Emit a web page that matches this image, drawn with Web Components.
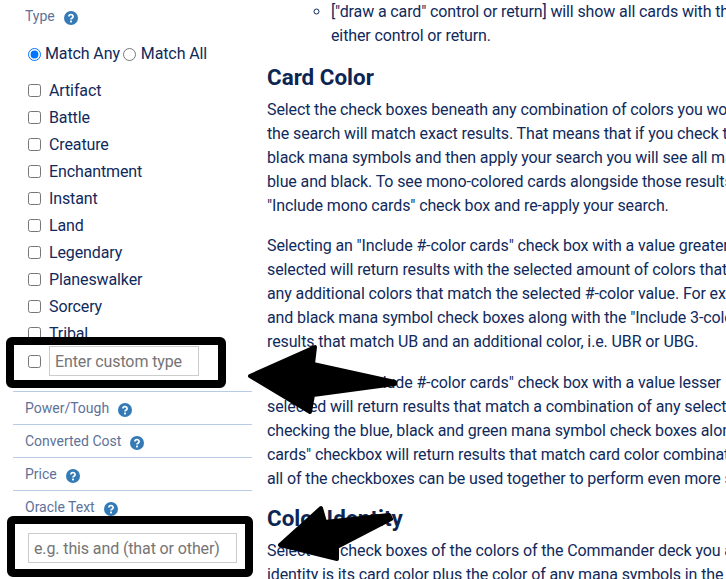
<!DOCTYPE html>
<html lang="en">
<head>
<meta charset="utf-8">
<title>Search help</title>
<style>
  html, body { margin: 0; height: 100%; overflow: hidden; background: #fff; }
  body { font-family: Roboto, "Liberation Sans", sans-serif; font-size: 16px; line-height: 24px; letter-spacing: -0.12px; color: #102a5c; }
</style>
</head>
<body>
<help-page>
  <search-sidebar slot="side">
    <type-filter></type-filter>
    <filter-row label="Power/Tough"></filter-row>
    <filter-row label="Converted Cost"></filter-row>
    <filter-row label="Price"></filter-row>
    <filter-row label="Oracle Text" placeholder="e.g. this and (that or other)"></filter-row>
  </search-sidebar>
  <help-doc slot="main">
    <sub-item>["draw a card" control or return] will show all cards with the<br>either control or return.</sub-item>
    <doc-heading>Card Color</doc-heading>
    <doc-para>Select the check boxes beneath any combination of colors you would<br>the search will match exact results. That means that if you check the<br>black mana symbols and then apply your search you will see all mana<br>blue and black. To see mono-colored cards alongside those results<br>"Include mono cards" check box and re-apply your search.</doc-para>
    <doc-para class="next">Selecting an "Include #-color cards" check box with a value greater<br>selected will return results with the selected amount of colors that<br>any additional colors that match the selected #-color value. For example<br>and black mana symbol check boxes along with the "Include 3-color<br>results that match UB and an additional color, i.e. UBR or UBG.</doc-para>
    <doc-para class="next">Selecting an "Include #-color cards" check box with a value lesser<br>selected will return results that match a combination of any selected<br>checking the blue, black and green mana symbol check boxes along<br>cards" checkbox will return results that match card color combination<br>all of the checkboxes can be used together to perform even more specific</doc-para>
    <doc-heading class="tight">Color Identity</doc-heading>
    <doc-para class="after">Select the check boxes of the colors of the Commander deck you are<br>identity is its card color plus the color of any mana symbols in the</doc-para>
  </help-doc>
</help-page>
<mark-up></mark-up>

<script>
class HelpPage extends HTMLElement {
  constructor() {
    super();
    this.shadowDOM = this.attachShadow({ mode: 'open' });
  }

  connectedCallback() {
    this.shadowDOM.innerHTML = `
      <style>
        :host { display: grid; grid-template-columns: 253px 1fr; height: 100vh; overflow: hidden; }
      </style>
      <slot name="side"></slot>
      <slot name="main"></slot>
    `;
  }
}

class SearchSidebar extends HTMLElement {
  constructor() {
    super();
    this.shadowDOM = this.attachShadow({ mode: 'open' });
  }

  connectedCallback() {
    this.shadowDOM.innerHTML = `
      <style>
        :host { display: block; padding-left: 13px; overflow: hidden; }
      </style>
      <slot></slot>
    `;
  }
}

class HelpIcon extends HTMLElement {
  constructor() {
    super();
    this.shadowDOM = this.attachShadow({ mode: 'open' });
  }

  connectedCallback() {
    this.shadowDOM.innerHTML = `
      <style>
        :host { display: block; width: 14px; height: 14px; margin: 3px 0 0 9px; }
        svg { display: block; }
      </style>
      <svg width="14" height="14" viewBox="0 0 14 14">
        <circle cx="7" cy="7" r="7" fill="#337ab7"/>
        <path d="M4.9 5.5a2.1 1.9 0 1 1 3.3 1.5c-.8.5-1.2.8-1.2 1.6" fill="none" stroke="#fff" stroke-width="1.7"/>
        <rect x="6.05" y="9.6" width="1.9" height="1.8" fill="#fff"/>
      </svg>
    `;
  }
}

class FilterTitle extends HTMLElement {
  constructor() {
    super();
    this.shadowDOM = this.attachShadow({ mode: 'open' });
  }

  connectedCallback() {
    this.shadowDOM.innerHTML = `
      <style>
        :host { display: flex; align-items: center; height: 20px; padding-left: 12px; font-size: 14px; line-height: 20px; letter-spacing: 0; color: #5d7299; }
      </style>
      <slot></slot>
      <help-icon></help-icon>
    `;
  }
}

class TypeFilter extends HTMLElement {
  constructor() {
    super();
    this.shadowDOM = this.attachShadow({ mode: 'open' });
  }

  connectedCallback() {
    const types = ['Artifact', 'Battle', 'Creature', 'Enchantment', 'Instant', 'Land', 'Legendary', 'Planeswalker', 'Sorcery', 'Tribal'];
    this.shadowDOM.innerHTML = `
      <style>
        :host { display: block; padding: 6px 0 15px; }
        input { margin: 0; width: 13px; height: 13px; flex: none; }
        .match { display: flex; align-items: center; height: 24px; margin: 16px 0 11px; padding-left: 15px; }
        .match input { margin-right: 4px; }
        .match span { margin-right: 3px; }
        .match span + input { margin-right: 5px; }
        .row { display: flex; align-items: center; gap: 8px; height: 27px; padding-left: 15px; }
        .custom { height: 30px; margin-top: -1px; position: relative; }
        .custom input[type=text] { width: 150px; height: 30px; box-sizing: border-box; padding: 0 5px; border: 1px solid #ccc; font: 16px Roboto, sans-serif; letter-spacing: -0.12px; color: #102a5c; background: #fff; }
        ::placeholder { color: #757575; opacity: 1; }
      </style>
      <filter-title>Type</filter-title>
      <div class="match">
        <input type="radio" name="m" checked><span>Match Any</span>
        <input type="radio" name="m"><span>Match All</span>
      </div>
      ${types.map((t) => `<label class="row"><input type="checkbox">${t}</label>`).join('')}
      <div class="row custom"><input type="checkbox"><input type="text" placeholder="Enter custom type"></div>
    `;
  }
}

class FilterRow extends HTMLElement {
  constructor() {
    super();
    this.shadowDOM = this.attachShadow({ mode: 'open' });
  }

  connectedCallback() {
    const placeholder = this.getAttribute('placeholder');
    this.shadowDOM.innerHTML = `
      <style>
        :host { display: block; width: 239px; border-top: 1px solid #b9cbe6; padding: 6px 0; height: 20px; }
        :host([placeholder]) { height: 75px; padding-bottom: 6px; box-sizing: content-box; }
        input { display: block; box-sizing: border-box; width: 209px; height: 30px; margin: 16px 0 0 15px; padding: 0 5px; border: 1px solid #ccc; font: 16px Roboto, sans-serif; letter-spacing: -0.12px; }
        ::placeholder { color: #757575; opacity: 1; }
      </style>
      <filter-title>${this.getAttribute('label')}</filter-title>
      ${placeholder ? `<input type="text" placeholder="${placeholder}">` : ''}
    `;
  }
}

class HelpDoc extends HTMLElement {
  constructor() {
    super();
    this.shadowDOM = this.attachShadow({ mode: 'open' });
  }

  connectedCallback() {
    this.shadowDOM.innerHTML = `
      <style>
        :host { display: block; padding-left: 14px; white-space: nowrap; overflow: hidden; }
      </style>
      <slot></slot>
    `;
  }
}

class SubItem extends HTMLElement {
  constructor() {
    super();
    this.shadowDOM = this.attachShadow({ mode: 'open' });
  }

  connectedCallback() {
    this.shadowDOM.innerHTML = `
      <style>
        :host { display: block; }
        ul { margin: 0; padding-left: 64px; list-style: circle; }
      </style>
      <ul><li><slot></slot></li></ul>
    `;
  }
}

class DocHeading extends HTMLElement {
  constructor() {
    super();
    this.shadowDOM = this.attachShadow({ mode: 'open' });
  }

  connectedCallback() {
    this.shadowDOM.innerHTML = `
      <style>
        :host { display: block; }
        h3 { margin: 14px 0 6px; font-size: 22.4px; line-height: 30px; font-weight: 700; letter-spacing: 0; color: #0d2553; }
        :host(.tight) h3 { margin-top: 12px; }
      </style>
      <h3><slot></slot></h3>
    `;
  }
}

class DocPara extends HTMLElement {
  constructor() {
    super();
    this.shadowDOM = this.attachShadow({ mode: 'open' });
  }

  connectedCallback() {
    this.shadowDOM.innerHTML = `
      <style>
        :host { display: block; }
        :host(.next) { margin-top: 16.4px; }
        :host(.after) { margin-top: 2.2px; }
      </style>
      <slot></slot>
    `;
  }
}

// hand drawn boxes and arrows on top of the page
class MarkUp extends HTMLElement {
  constructor() {
    super();
    this.shadowDOM = this.attachShadow({ mode: 'open' });
  }

  connectedCallback() {
    this.shadowDOM.innerHTML = `
      <style>
        :host { position: absolute; inset: 0; pointer-events: none; }
        svg { display: block; }
        rect { fill: none; stroke: #000; stroke-width: 8; }
        polygon { fill: #000; stroke: #000; stroke-width: 4; stroke-linejoin: round; }
      </style>
      <svg width="726" height="579" viewBox="0 0 726 579">
        <rect x="10" y="341" width="212" height="43" rx="2"/>
        <rect x="11" y="520" width="238" height="53" rx="2"/>
        <polygon points="250,376 315,347 313,364 395,382 395,384 313,395 310,412"/>
        <polygon points="280,545 321,508 325,522 389,515 391,519 337,547 337,559"/>
      </svg>
    `;
  }
}

customElements.define('help-page', HelpPage);
customElements.define('search-sidebar', SearchSidebar);
customElements.define('help-icon', HelpIcon);
customElements.define('filter-title', FilterTitle);
customElements.define('type-filter', TypeFilter);
customElements.define('filter-row', FilterRow);
customElements.define('help-doc', HelpDoc);
customElements.define('sub-item', SubItem);
customElements.define('doc-heading', DocHeading);
customElements.define('doc-para', DocPara);
customElements.define('mark-up', MarkUp);
</script>
</body>
</html>
